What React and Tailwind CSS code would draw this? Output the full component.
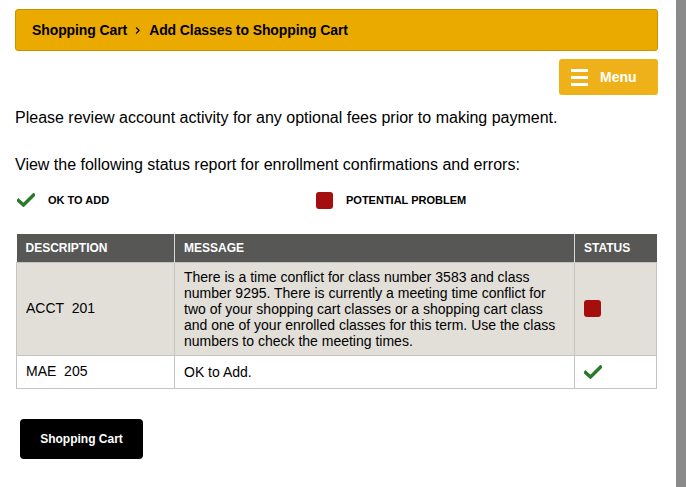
import React from 'react';

const Check = ({ className }) => (
  <svg viewBox="0 0 18 14" className={className}>
    <path d="M1.5 7.5 L6.5 12 L16.5 2" fill="none" stroke="#2b7a2b" strokeWidth="3.4" strokeLinecap="square" />
  </svg>
);

const RedBox = ({ className }) => <div className={`rounded-[3px] bg-[#a50e0e] ${className}`} />;

const rows = [
  {
    desc: 'ACCT  201',
    msg: 'There is a time conflict for class number 3583 and class number 9295. There is currently a meeting time conflict for two of your shopping cart classes or a shopping cart class and one of your enrolled classes for this term. Use the class numbers to check the meeting times.',
    ok: false,
  },
  { desc: 'MAE  205', msg: 'OK to Add.', ok: true },
];

export default function App() {
  return (
    <div className="flex min-h-[487px] w-[686px] bg-white font-['Liberation_Sans',Arial,sans-serif] text-black">
      <div className="flex-1 pl-[15px] pr-[18px] pt-[9px]">
        {/* breadcrumb */}
        <div className="flex h-[42px] items-center rounded-[3px] border border-[#c99300] bg-[#ebaa00] pl-[16px] text-[14px] font-bold tracking-[-0.1px]">
          <span>Shopping Cart</span>
          <svg viewBox="0 0 8 10" className="ml-[8px] mr-[8px] h-[9px] w-[6px]">
            <path d="M1.5 1 L5.5 5 L1.5 9" fill="none" stroke="#000" strokeWidth="1.6" />
          </svg>
          <span>Add Classes to Shopping Cart</span>
        </div>

        <div className="mt-[8px] flex justify-end">
          <button className="flex h-[36px] w-[99px] items-center rounded-[3px] bg-[#efb11a] pl-[12px] text-[14px] font-bold text-white">
            <span className="flex flex-col gap-[4px]">
              <span className="block h-[3px] w-[17px] bg-white" />
              <span className="block h-[3px] w-[17px] bg-white" />
              <span className="block h-[3px] w-[17px] bg-white" />
            </span>
            <span className="ml-[12px]">Menu</span>
          </button>
        </div>

        <p className="mt-[14px] text-[16px] leading-[18px]">Please review account activity for any optional fees prior to making payment.</p>
        <p className="mt-[29px] text-[16px] leading-[18px]">View the following status report for enrollment confirmations and errors:</p>

        {/* legend */}
        <div className="mt-[17px] flex h-[18px] items-center text-[11px] font-bold">
          <div className="flex w-[301px] items-center">
            <Check className="ml-[2px] h-[14px] w-[18px]" />
            <span className="ml-[13px]">OK TO ADD</span>
          </div>
          <RedBox className="h-[17px] w-[17px]" />
          <span className="ml-[13px]">POTENTIAL PROBLEM</span>
        </div>

        {/* table */}
        <table className="ml-[1px] mt-[25px] w-[641px] border-collapse text-[14px]">
          <thead>
            <tr className="h-[28px] bg-[#575755] text-left text-[12px] font-bold text-white">
              <th className="w-[158px] border-r border-[#d8d8d8] pl-[9px] font-bold">DESCRIPTION</th>
              <th className="border-r border-[#d8d8d8] pl-[9px] font-bold">MESSAGE</th>
              <th className="w-[82px] pl-[9px] font-bold">STATUS</th>
            </tr>
          </thead>
          <tbody>
            {rows.map((r) => (
              <tr key={r.desc} className={r.ok ? 'h-[33px] bg-white' : 'bg-[#e2dfd9]'}>
                <td className="whitespace-pre border border-[#c4c4c4] pl-[9px] align-middle">{r.desc}</td>
                <td className="border border-[#c4c4c4] py-[6px] pl-[9px] pr-[8px] leading-[16px]">{r.msg}</td>
                <td className="border border-[#c4c4c4] pl-[9px] align-middle">
                  {r.ok ? <Check className="h-[14px] w-[18px]" /> : <RedBox className="h-[17px] w-[17px]" />}
                </td>
              </tr>
            ))}
          </tbody>
        </table>

        <button className="ml-[5px] mt-[30px] h-[40px] w-[123px] rounded-[4px] bg-black text-[12px] font-bold text-white">
          Shopping Cart
        </button>
      </div>
      <div className="w-[10px] bg-[#8a8a8a]" />
    </div>
  );
}
